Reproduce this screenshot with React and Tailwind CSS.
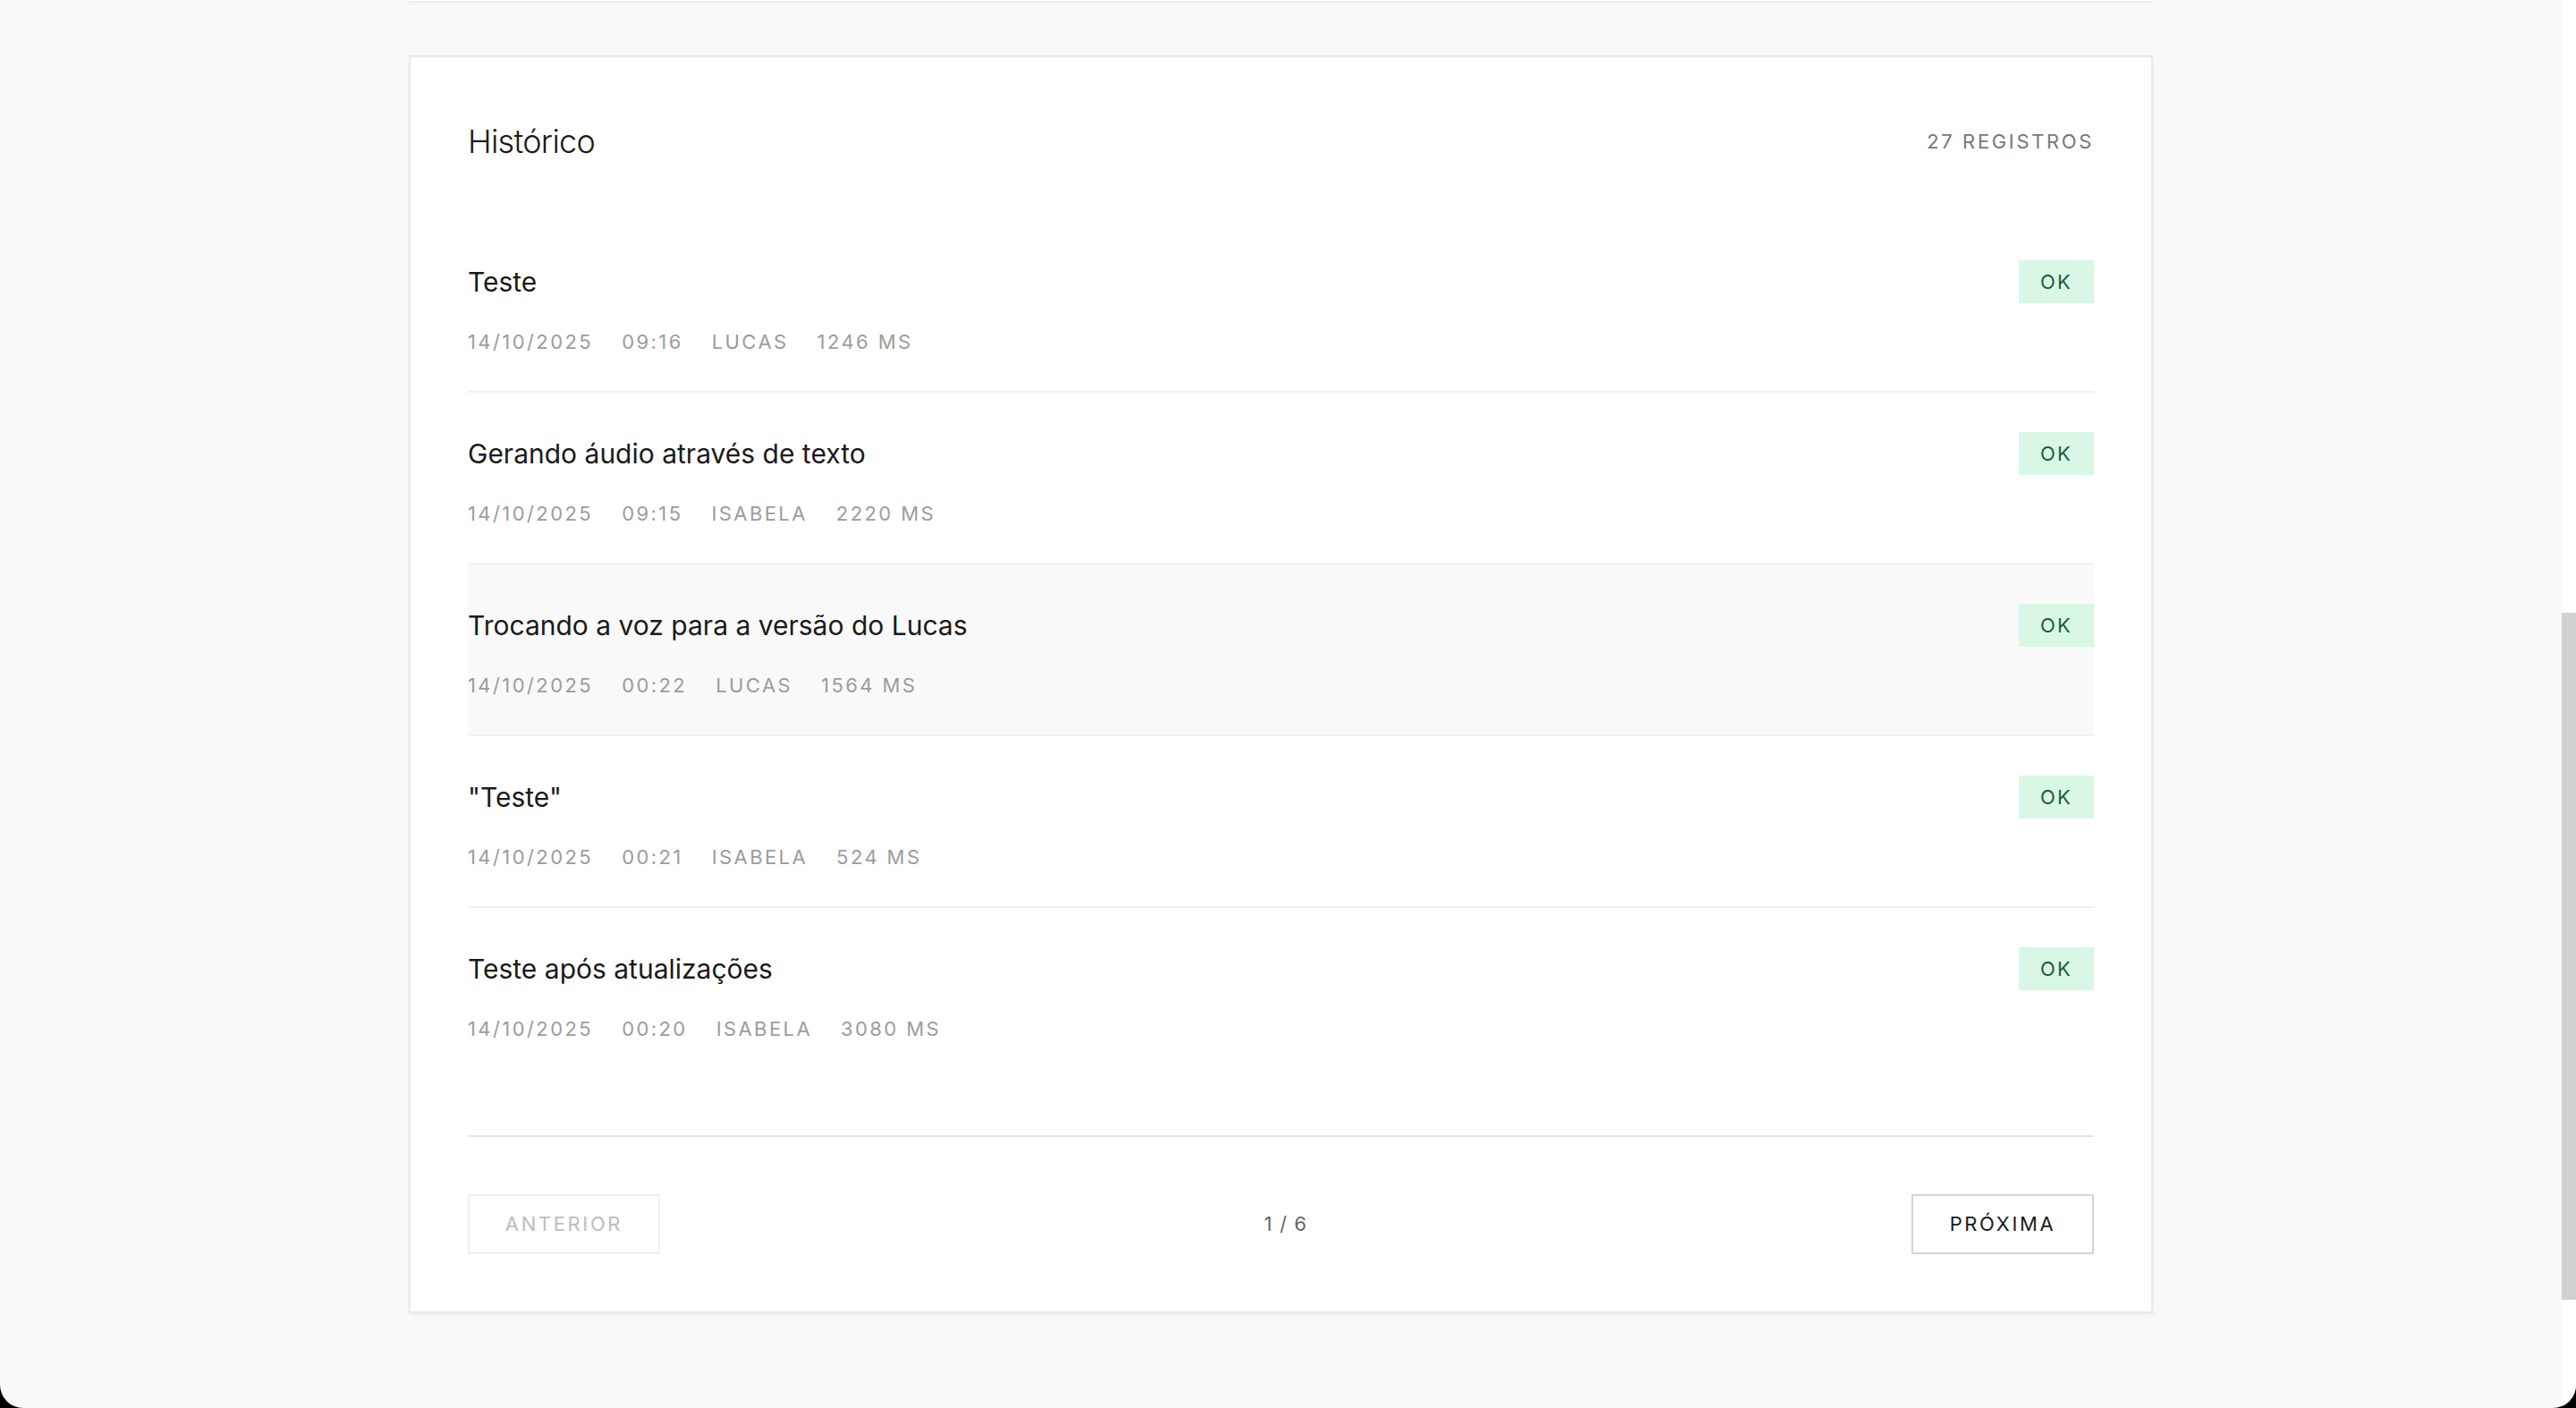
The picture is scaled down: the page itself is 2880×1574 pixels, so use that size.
const records = [
  { title: "Teste", date: "14/10/2025", time: "09:16", user: "LUCAS", ms: "1246 MS" },
  { title: "Gerando áudio através de texto", date: "14/10/2025", time: "09:15", user: "ISABELA", ms: "2220 MS" },
  { title: "Trocando a voz para a versão do Lucas", date: "14/10/2025", time: "00:22", user: "LUCAS", ms: "1564 MS", active: true },
  { title: "\"Teste\"", date: "14/10/2025", time: "00:21", user: "ISABELA", ms: "524 MS" },
  { title: "Teste após atualizações", date: "14/10/2025", time: "00:20", user: "ISABELA", ms: "3080 MS" },
];

// One line of the history list
function HistoryRow({ title, date, time, user, ms, active, last }) {
  return (
    <div
      className={`flex justify-between items-start pt-[44px] pb-[40px] ${last ? "" : "border-b-2 border-[#f2f2f2]"} ${active ? "bg-[#f9f9f9]" : ""}`}
    >
      <div>
        <p className="text-[30px] leading-[48px] text-[#1a1a1a]">{title}</p>
        <div className="mt-[28px] flex gap-8 text-[22px] leading-[30px] tracking-[0.11em] text-[#9c9c9c]">
          <span>{date}</span>
          <span>{time}</span>
          <span>{user}</span>
          <span>{ms}</span>
        </div>
      </div>
      <span className="h-[48px] px-6 flex items-center bg-[#d8f7e4] text-[22px] tracking-[0.1em] text-[#1c5c3f]">
        OK
      </span>
    </div>
  );
}

export default function App() {
  return (
    <div className="h-[1574px] overflow-hidden bg-black font-['Inter',sans-serif]">
      <div className="h-full flex rounded-b-[26px] overflow-hidden bg-[#f9f9f9]">
        {/* Page content */}
        <div className="flex-1 flex flex-col items-center">
          {/* Bottom edge of the card above */}
          <div className="w-[1950px] h-[2px] bg-white border-b border-[#ececec] shadow-[0_1px_3px_rgba(0,0,0,0.08)]" />

          <div className="mt-[60px] w-[1950px] bg-white border-2 border-[#e9e9e9] shadow-[0_2px_4px_rgba(0,0,0,0.05)] p-16">
            {/* Header */}
            <div className="h-[60px] flex justify-between items-center">
              <h2 className="text-[36px] font-light tracking-[-0.02em] text-[#1a1a1a]">Histórico</h2>
              <span className="text-[22px] tracking-[0.12em] text-[#777777]">27 REGISTROS</span>
            </div>

            {/* Records */}
            <div className="mt-[59px]">
              {records.map((r, i) => (
                <HistoryRow key={i} {...r} last={i === records.length - 1} />
              ))}
            </div>

            {/* Pagination */}
            <div className="mt-16 pt-16 border-t-2 border-[#e4e4e4] flex justify-between items-center">
              <button className="w-[215px] h-[67px] border-2 border-[#efefef] text-[22px] tracking-[0.12em] text-[#bdbdbd]">
                ANTERIOR
              </button>
              <span className="text-[22px] tracking-[0.05em] text-[#666666]">1 / 6</span>
              <button className="w-[204px] h-[67px] border-2 border-[#d4d4d4] text-[22px] tracking-[0.12em] text-[#1a1a1a]">
                PRÓXIMA
              </button>
            </div>
          </div>
        </div>

        {/* Scrollbar */}
        <div className="w-[16px] bg-white flex flex-col">
          <div className="h-[685px]" />
          <div className="h-[768px] bg-[#d1d1d1]" />
        </div>
      </div>
    </div>
  );
}
